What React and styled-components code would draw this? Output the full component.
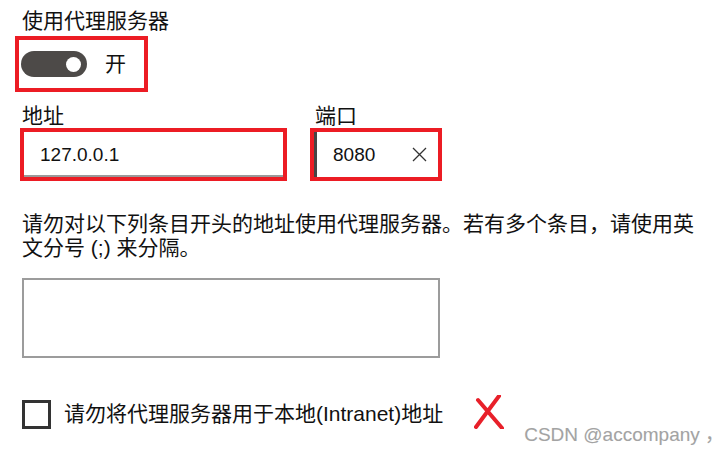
import styled, { createGlobalStyle } from 'styled-components'

const GlobalStyle = createGlobalStyle`
  body {
    margin: 0;
    background: #ffffff;
    font-family: "Liberation Sans", "Noto Sans CJK SC", sans-serif;
    color: #111111;
  }
`

const Page = styled.div`
  display: flex;
  flex-direction: column;
  align-items: flex-start;
  padding: 9px 0 0 22px;
`

const Label = styled.div`
  font-size: ${p => p.size || 21}px;
  line-height: 24px;
  padding-left: ${p => p.indent || 0}px;
`

// red annotation frame drawn around a control
const Highlight = styled.div`
  display: flex;
  align-items: center;
  border: 4px solid #ec1c24;
  box-sizing: border-box;
  width: ${p => p.w}px;
  height: ${p => p.h}px;
`

const ToggleBox = styled(Highlight)`
  margin: 3px 0 0 -7px;
  padding-left: 2px;
  gap: 18px;
`

const Toggle = styled.div`
  display: flex;
  align-items: center;
  justify-content: flex-end;
  width: 66px;
  height: 26px;
  border-radius: 13px;
  background: #4d4a48;
  padding-right: 6px;
  box-sizing: border-box;
`

const Knob = styled.div`
  width: 15px;
  height: 15px;
  border-radius: 50%;
  background: #ffffff;
`

const ToggleText = styled.span`
  font-size: 21px;
  line-height: 24px;
`

const FieldRow = styled.div`
  display: grid;
  grid-template-columns: 290px 132px;
  margin: 12px 0 0 -2px;
`

const Field = styled.div`
  display: flex;
  flex-direction: column;
`

const Input = styled.div`
  flex: 1;
  align-self: stretch;
  display: flex;
  align-items: center;
  justify-content: space-between;
  background: #ffffff;
  font-size: 19px;
  padding: 0 11px 0 16px;
  border-bottom: ${p => (p.underline ? '2px solid #9a9a9a' : 'none')};
  border-left: ${p => (p.focused ? '3px solid #454545' : 'none')};
  padding-top: ${p => (p.underline ? '2px' : '0')};
`

const Description = styled.p`
  margin: 31px 0 0;
  max-width: 682px;
  font-size: 21px;
  line-height: 24px;
`

const TextArea = styled.div`
  margin-top: 18px;
  width: 418px;
  height: 80px;
  border: 2px solid #9c9c9c;
  box-sizing: border-box;
`

const CheckRow = styled.div`
  display: flex;
  align-items: flex-start;
  margin-top: 42px;
`

const CheckBox = styled.div`
  width: 29px;
  height: 29px;
  border: 3px solid #333333;
  box-sizing: border-box;
  flex-shrink: 0;
`

const CheckText = styled.span`
  font-size: 21px;
  line-height: 24px;
  margin: 2px 0 0 13px;
`

const Mark = styled.svg`
  margin: -5px 0 0 31px;
  flex-shrink: 0;
`

const Watermark = styled.span`
  font-size: 19px;
  color: #a3a3a3;
  margin: 19px 0 0 20px;
  text-shadow: 0 0 1px rgba(0, 0, 0, 0.08);
`

function App() {
  return (
    <>
      <GlobalStyle />
      <Page>
        <Label>使用代理服务器</Label>
        <ToggleBox w={133} h={56}>
          <Toggle>
            <Knob />
          </Toggle>
          <ToggleText>开</ToggleText>
        </ToggleBox>
        <FieldRow>
          <Field>
            <Label indent={2}>地址</Label>
            <Highlight w={267} h={53}>
              <Input underline>127.0.0.1</Input>
            </Highlight>
          </Field>
          <Field>
            <Label indent={5}>端口</Label>
            <Highlight w={132} h={53}>
              <Input focused>
                8080
                <svg width="15" height="15" viewBox="0 0 15 15">
                  <path d="M1 1 L14 14 M14 1 L1 14" stroke="#333" strokeWidth="1.3" fill="none" />
                </svg>
              </Input>
            </Highlight>
          </Field>
        </FieldRow>
        <Description>
          请勿对以下列条目开头的地址使用代理服务器。若有多个条目，请使用英文分号 (;) 来分隔。
        </Description>
        <TextArea />
        <CheckRow>
          <CheckBox />
          <CheckText>请勿将代理服务器用于本地(Intranet)地址</CheckText>
          <Mark width="30" height="34" viewBox="0 0 30 34">
            <path d="M25 1 L2 32 M4 5 L28 33" stroke="#e8202a" strokeWidth="4" strokeLinecap="round" fill="none" />
          </Mark>
          <Watermark>CSDN @accompany ，</Watermark>
        </CheckRow>
      </Page>
    </>
  )
}

export default App
